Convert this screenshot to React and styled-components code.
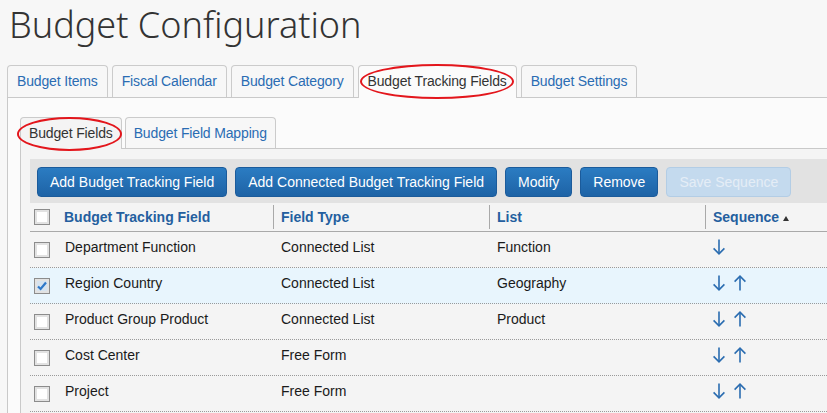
import React from 'react';
import styled, { createGlobalStyle } from 'styled-components';

const GlobalStyle = createGlobalStyle`
  body {
    margin: 0;
    background: #f7f7f7;
    font-family: "Liberation Sans", Arial, sans-serif;
    font-size: 14px;
    overflow: hidden;
  }
`

const Page = styled.div`
  width: 1000px;
  padding-left: 7px;
`

const Title = styled.h1`
  margin: 0 0 16px;
  padding-left: 2px;
  font-family: "Noto Sans", "Open Sans", sans-serif;
  font-weight: 300;
  font-size: 36px;
  line-height: 49px;
  color: #333;
`

const TabBar = styled.div`
  display: flex;
  gap: ${props => props.gap}px;
  border-bottom: 1px solid #c9c9c9;
  height: ${props => props.height}px;
`

const Tab = styled.div`
  position: relative;
  box-sizing: border-box;
  height: ${props => props.active ? props.height + 1 : props.height}px;
  padding: 0 ${props => props.pad}px;
  border: 1px solid #cbcbcb;
  border-bottom: none;
  border-radius: 4px 4px 0 0;
  background: ${props => props.active ? props.panel : '#f7f7f7'};
  color: ${props => props.active ? '#333' : '#2a6cb3'};
  line-height: ${props => props.height - 1}px;
  letter-spacing: -0.15px;
  white-space: nowrap;

  &::after {
    content: '';
    display: ${props => props.ring ? 'block' : 'none'};
    position: absolute;
    left: ${props => props.ring ? props.ring[0] : 0}px;
    top: ${props => props.ring ? props.ring[1] : 0}px;
    right: ${props => props.ring ? props.ring[2] : 0}px;
    bottom: ${props => props.ring ? props.ring[3] : 0}px;
    border: 2px solid #e3161c;
    border-radius: 50%;
    pointer-events: none;
  }
`

const Panel = styled.div`
  border-left: 1px solid #c9c9c9;
  background: #fbfbfb;
  padding: 19px 0 0 12px;
  height: 320px;
`

const SubPanel = styled.div`
  border-left: 1px solid #c9c9c9;
  background: #f4f4f4;
  padding: 10px 0 0 9px;
  height: 280px;
`

const Toolbar = styled.div`
  display: flex;
  gap: 8px;
  padding: 8px 7px 6px;
  background: #e2e2e2;
`

const Button = styled.button`
  height: 30px;
  padding: 0 12px;
  border: 1px solid ${props => props.disabled ? '#b3cde5' : '#1b5b9b'};
  border-radius: 4px;
  background: ${props => props.disabled
    ? '#c4daee'
    : 'linear-gradient(#2b7cc2, #1e63a6)'};
  color: ${props => props.disabled ? '#e4edf6' : '#fff'};
  font-family: "Liberation Sans", Arial, sans-serif;
  font-size: 14px;
  white-space: nowrap;
  cursor: ${props => props.disabled ? 'default' : 'pointer'};
`

const Grid = styled.div`
  display: grid;
  grid-template-columns: 27px 216px 216px 216px 1fr;
  box-sizing: border-box;
  height: ${props => props.head ? 29 : 36}px;
  background: ${props => props.selected ? '#e8f5fd' : 'transparent'};
  border-bottom: ${props => props.head ? '1px solid #a9a9a9' : '1px dotted #9a9a9a'};
`

const HeadCell = styled.div`
  display: flex;
  align-items: center;
  margin: 2px 0;
  padding-left: ${props => props.first ? 4 : 7}px;
  border-left: ${props => props.divider ? '1px solid #a9a9a9' : 'none'};
  color: #245f9f;
  font-weight: bold;
  line-height: 16px;
  white-space: nowrap;
`

const Cell = styled.div`
  display: flex;
  align-items: flex-start;
  gap: 9px;
  padding: ${props => props.first ? '10px 0 0 4px' : '7px 0 0 8px'};
  color: #1a1a1a;
  line-height: 17px;
  white-space: nowrap;
`

const Check = styled.span`
  position: relative;
  display: inline-block;
  box-sizing: border-box;
  width: 16px;
  height: 16px;
  border: 1px solid #8c8c8c;
  box-shadow: inset 0 0 0 2px #e2e2e2;
  background: ${props => props.checked ? '#d6e3ef' : '#fff'};
`

const SortMark = styled.span`
  display: inline-block;
  margin: 2px 0 0 4px;
  border-left: 3px solid transparent;
  border-right: 3px solid transparent;
  border-bottom: 5px solid #333;
`

function Arrow({ up }) {
  return (
    <svg width="12" height="16" viewBox="0 0 12 16" fill="none" stroke="#2a6cb0" strokeWidth="1.6"
      style={up ? { transform: 'rotate(180deg)' } : undefined}>
      <path d="M6 0.5V15" />
      <path d="M0.6 9.4L6 14.8L11.4 9.4" />
    </svg>
  )
}

function Checkbox({ checked }) {
  return (
    <Check checked={checked}>
      {checked && (
        <svg width="14" height="14" viewBox="0 0 14 14" style={{ position: 'absolute', left: 0, top: 0 }}>
          <path d="M3 7.5L5.6 10L11 3.5" fill="none" stroke="#2f78c8" strokeWidth="2.2" />
        </svg>
      )}
    </Check>
  )
}

const topTabs = ['Budget Items', 'Fiscal Calendar', 'Budget Category', 'Budget Tracking Fields', 'Budget Settings']
const subTabs = ['Budget Fields', 'Budget Field Mapping']

const rows = [
  { name: 'Department Function', type: 'Connected List', list: 'Function', up: false },
  { name: 'Region Country', type: 'Connected List', list: 'Geography', up: true, checked: true },
  { name: 'Product Group Product', type: 'Connected List', list: 'Product', up: true },
  { name: 'Cost Center', type: 'Free Form', list: '', up: true },
  { name: 'Project', type: 'Free Form', list: '', up: true },
]

function App() {
  return (
    <Page>
      <GlobalStyle />
      <Title>Budget Configuration</Title>
      <TabBar gap={4} height={32}>
        {topTabs.map(tab => {
          const active = tab === 'Budget Tracking Fields'
          return (
            <Tab key={tab} height={32} pad={9} active={active} panel="#fbfbfb" ring={active ? [1, -2, 2, -1] : null}>
              {tab}
            </Tab>
          )
        })}
      </TabBar>
      <Panel>
        <TabBar gap={3} height={31}>
          {subTabs.map(tab => {
            const active = tab === 'Budget Fields'
            return (
              <Tab key={tab} height={31} pad={8} active={active} panel="#f4f4f4" ring={active ? [-4, -1, -1, -2] : null}>
                {tab}
              </Tab>
            )
          })}
        </TabBar>
        <SubPanel>
          <Toolbar>
            <Button>Add Budget Tracking Field</Button>
            <Button>Add Connected Budget Tracking Field</Button>
            <Button>Modify</Button>
            <Button>Remove</Button>
            <Button disabled>Save Sequence</Button>
          </Toolbar>
          <Grid head>
            <HeadCell first><Checkbox /></HeadCell>
            <HeadCell>Budget Tracking Field</HeadCell>
            <HeadCell divider>Field Type</HeadCell>
            <HeadCell divider>List</HeadCell>
            <HeadCell divider>Sequence<SortMark /></HeadCell>
          </Grid>
          {rows.map(row => (
            <Grid key={row.name} selected={row.checked}>
              <Cell first><Checkbox checked={row.checked} /></Cell>
              <Cell>{row.name}</Cell>
              <Cell>{row.type}</Cell>
              <Cell>{row.list}</Cell>
              <Cell>
                <Arrow />
                {row.up && <Arrow up />}
              </Cell>
            </Grid>
          ))}
        </SubPanel>
      </Panel>
    </Page>
  )
}

export default App;
